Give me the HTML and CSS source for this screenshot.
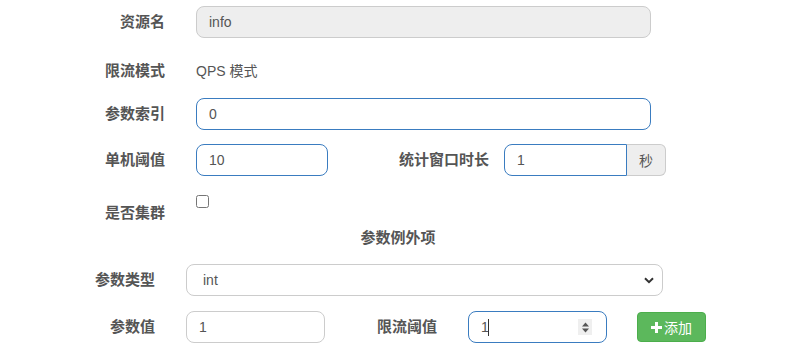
FILE: index.html
```html
<!DOCTYPE html>
<html lang="zh">
<head>
<meta charset="utf-8">
<title>热点规则</title>
<link rel="stylesheet" href="styles.css">
</head>
<body>
<form class="form">
  <section class="group main">
    <div class="row">
      <label class="label">资源名</label>
      <input class="control wide disabled" type="text" value="info" disabled>
    </div>
    <div class="row row-static">
      <label class="label">限流模式</label>
      <span class="static">QPS 模式</span>
    </div>
    <div class="row">
      <label class="label">参数索引</label>
      <input class="control wide focus" type="text" value="0">
    </div>
    <div class="row">
      <label class="label">单机阈值</label>
      <input class="control short focus" type="text" value="10">
      <label class="label label-mid">统计窗口时长</label>
      <div class="input-group">
        <input class="control grouped focus" type="text" value="1">
        <span class="addon">秒</span>
      </div>
    </div>
    <div class="row row-check">
      <label class="label">是否集群</label>
      <input class="check" type="checkbox">
    </div>
  </section>

  <h4 class="heading">参数例外项</h4>

  <section class="group sub">
    <div class="row">
      <label class="label">参数类型</label>
      <select class="control select">
        <option>int</option>
      </select>
    </div>
    <div class="row">
      <label class="label">参数值</label>
      <input class="control medium" type="text" value="1">
      <label class="label label-mid2">限流阈值</label>
      <div class="number">
        <input class="control medium focus" type="text" value="1">
        <span class="caret-line"></span>
        <span class="spinner">
          <svg width="9" height="13" viewBox="0 0 9 13"><path d="M4.5 1.5 L8 5.5 H1 Z M1 7.5 H8 L4.5 11.5 Z" fill="#555"/></svg>
        </span>
      </div>
      <button class="btn-add" type="button">
        <svg class="plus" width="11" height="11" viewBox="0 0 11 11"><path d="M4 0 H7 V4 H11 V7 H7 V11 H4 V7 H0 V4 H4 Z" fill="#fff"/></svg>
        <span>添加</span>
      </button>
    </div>
  </section>
</form>
</body>
</html>
```

FILE: styles.css
```css
* { box-sizing: border-box; }

body {
  margin: 0;
  background: #fff;
  font-family: "Liberation Sans", "Noto Sans CJK SC", sans-serif;
  font-size: 14px;
  color: #555;
}

.form {
  padding-top: 6px;
}

.row {
  display: flex;
  align-items: center;
  height: 32px;
  margin-bottom: 14px;
}

.label {
  flex: none;
  text-align: right;
  font-weight: bold;
  font-size: 15px;
  line-height: 20px;
  color: #555;
}

.main .label { width: 165px; margin-right: 31px; }
.main .label-mid { width: 161px; margin-right: 15px; }

.sub .label { width: 155px; margin-right: 31px; }
.sub .label-mid2 { width: 112px; margin-right: 31px; }

.control {
  flex: none;
  height: 32px;
  padding: 0 12px;
  border: 1px solid #ccc;
  border-radius: 8px;
  background: #fff;
  font-family: "Liberation Sans", "Noto Sans CJK SC", sans-serif;
  font-size: 14px;
  color: #555;
  outline: none;
}

.control.focus { border-color: #3a7cc0; }

.control.disabled {
  background: #eee;
  color: #555;
  opacity: 1;
  -webkit-text-fill-color: #555;
}

.wide { width: 455px; }
.short { width: 132px; }
.medium { width: 139px; }

.row-static { align-items: flex-start; }
.row-static .label,
.row-static .static { padding-top: 9px; line-height: 20px; }
.static { font-size: 14px; color: #555; }

.input-group {
  display: flex;
  height: 32px;
}

.grouped {
  width: 123px;
  border-radius: 8px 0 0 8px;
}

.addon {
  width: 39px;
  height: 32px;
  display: flex;
  align-items: center;
  justify-content: center;
  background: #eee;
  border: 1px solid #ccc;
  border-left: 0;
  border-radius: 0 6px 6px 0;
  font-size: 14px;
  color: #555;
}

.row-check { align-items: flex-start; height: 36px; margin-bottom: 0; }
.row-check .label { padding-top: 13px; }
.check {
  margin: 5px 0 0 0;
  width: 13px;
  height: 13px;
}

.heading {
  margin: 2px 0 0 0;
  height: 22px;
  text-align: center;
  font-size: 15px;
  line-height: 20px;
  font-weight: bold;
  color: #555;
  padding-left: 0;
  width: 796px;
}

.sub { margin-top: 14px; }

.select {
  width: 477px;
  -webkit-appearance: none;
  appearance: none;
  padding-left: 16px;
  background-image: url("data:image/svg+xml;utf8,<svg xmlns='http://www.w3.org/2000/svg' width='10' height='7' viewBox='0 0 10 7'><path d='M1 1.2 L5 5.2 L9 1.2' fill='none' stroke='%23333' stroke-width='2'/></svg>");
  background-repeat: no-repeat;
  background-position: right 8px center;
}

.sub .row:first-child { margin-bottom: 15px; }

.number {
  position: relative;
  flex: none;
  height: 32px;
}

.spinner {
  position: absolute;
  left: 110px;
  top: 8px;
  width: 14px;
  height: 16px;
  background: #efefef;
  display: flex;
  align-items: center;
  justify-content: center;
}

.caret-line {
  position: absolute;
  left: 20px;
  top: 8px;
  width: 1px;
  height: 17px;
  background: #333;
}

.btn-add {
  margin-left: 30px;
  width: 69px;
  height: 30px;
  display: flex;
  align-items: center;
  justify-content: center;
  gap: 2px;
  background: #5cb85c;
  border: 1px solid #4cae4c;
  border-radius: 4px;
  color: #fff;
  font-family: "Liberation Sans", "Noto Sans CJK SC", sans-serif;
  font-size: 14px;
  padding: 0 8px;
}

.plus { flex: none; }
```
